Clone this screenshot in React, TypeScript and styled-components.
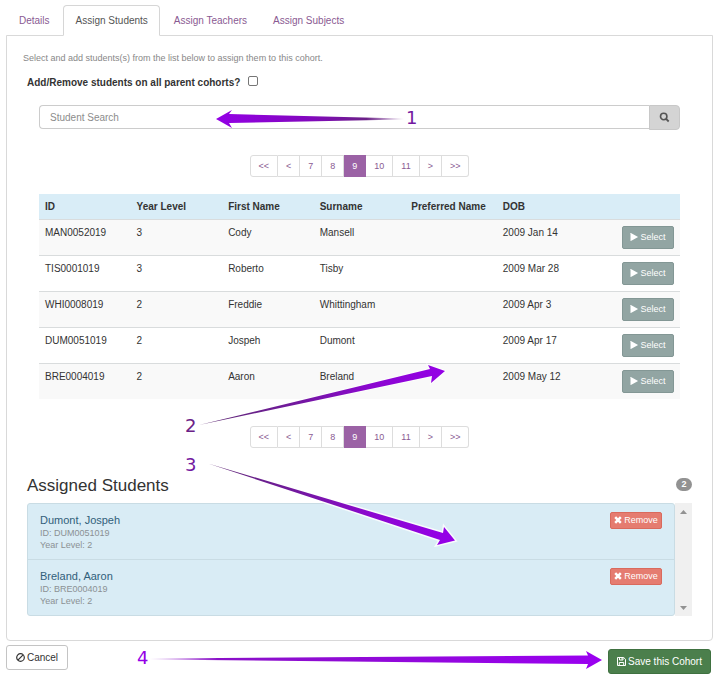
import React from "react";
import styled, { createGlobalStyle } from "styled-components";

const GlobalStyle = createGlobalStyle`
  *, *::before, *::after { box-sizing: border-box; }
  body {
    margin: 0;
    background: #fff;
    color: #333;
    font-family: "Liberation Sans", Arial, sans-serif;
    font-size: 10px;
    line-height: 14px;
  }
  button, input { font-family: inherit; }
  a { text-decoration: none; }
`;

const Page = styled.div`
  position: relative;
  padding: 5px 6px;
`;

const TabBar = styled.nav`
  display: flex;
  gap: 1px;
  margin-bottom: -1px;
`;

const Tab = styled.a<{ $active?: boolean }>`
  padding: 8px 11px 7px 12px;
  border: 1px solid ${(p) => (p.$active ? "#d6d6d6" : "transparent")};
  border-bottom-color: ${(p) => (p.$active ? "#fff" : "transparent")};
  border-radius: 4px 4px 0 0;
  background: ${(p) => (p.$active ? "#fff" : "transparent")};
  color: ${(p) => (p.$active ? "#555" : "#8a5a92")};
  line-height: 14px;
`;

const Panel = styled.main`
  border: 1px solid #d9d9d9;
  border-radius: 0 0 4px 4px;
  padding: 15px 20px 24px;
`;

const Hint = styled.p`
  margin: 0 0 11px -4px;
  color: #888;
  font-size: 9px;
`;

const ParentToggle = styled.div`
  display: flex;
  align-items: center;
  gap: 8px;
  height: 14px;
  font-weight: bold;

  input {
    width: 10px;
    height: 10px;
    margin: 0 0 4px;
    appearance: none;
    border: 1px solid #767676;
    border-radius: 2px;
    background: #fff;
  }
  input:checked { background: #9b62a5; }
`;

const Finder = styled.section`
  margin: 0 12px;
`;

const SearchBar = styled.form`
  display: flex;
  margin-top: 15px;
`;

const SearchInput = styled.input`
  flex: 1;
  min-width: 0;
  height: 24px;
  padding: 0 10px;
  border: 1px solid #ccc;
  border-right: 0;
  border-radius: 4px 0 0 4px;
  color: #555;
  font-size: 10px;
  &::placeholder { color: #8c8c8c; opacity: 1; }
`;

const SearchButton = styled.button`
  display: flex;
  align-items: center;
  justify-content: center;
  width: 31px;
  height: 25px;
  padding: 0;
  border: 1px solid #c8c8c8;
  border-radius: 0 4px 4px 0;
  background: #d4d4d4;
  color: #555;
`;

const PageList = styled.ul`
  display: flex;
  justify-content: center;
  margin: 0;
  padding: 0;
  list-style: none;
`;

const PageItem = styled.li`
  &:first-child a { border-left-width: 1px; border-radius: 3px 0 0 3px; }
  &:last-child a { border-radius: 0 3px 3px 0; }
`;

const PageLink = styled.a<{ $current?: boolean }>`
  display: block;
  padding: 4px 8px;
  border: 1px solid ${(p) => (p.$current ? "#9b62a5" : "#ddd")};
  border-left-width: 0;
  background: ${(p) => (p.$current ? "#9b62a5" : "#fff")};
  color: ${(p) => (p.$current ? "#fff" : "#8a5a92")};
  font-size: 9px;
  line-height: 12px;
`;

const PagerTop = styled.nav`
  margin: 25px 0 17px;
`;

const PagerBottom = styled.nav`
  margin: 27px 0 0;
`;

const StudentTable = styled.table`
  width: 100%;
  table-layout: fixed;
  border-collapse: separate;
  border-spacing: 0;
`;

const HeadCell = styled.th`
  height: 25px;
  padding: 6px 6px 5px;
  background: #d9edf7;
  text-align: left;
  white-space: nowrap;
`;

const StudentRow = styled.tr`
  &:nth-child(odd) { background: #f9f9f9; }
`;

const Cell = styled.td<{ $action?: boolean }>`
  padding: 6px;
  border-top: 1px solid #d9dcdd;
  vertical-align: top;
  text-align: ${(p) => (p.$action ? "right" : "left")};
`;

const SelectButton = styled.button`
  display: inline-flex;
  align-items: center;
  justify-content: center;
  gap: 2px;
  width: 52px;
  height: 23px;
  padding: 0 0 1px;
  border: 1px solid #839795;
  border-radius: 2px;
  background: #92a5a3;
  color: #fff;
  font-size: 9px;
  vertical-align: top;
`;

const AssignedHeader = styled.header`
  display: flex;
  align-items: center;
  justify-content: space-between;
  margin-top: 27px;
  height: 22px;
`;

const AssignedTitle = styled.h2`
  margin: 0;
  font-size: 17px;
  font-weight: normal;
  line-height: 22px;
`;

const Badge = styled.span`
  min-width: 16px;
  height: 13px;
  margin-bottom: 4px;
  border-radius: 7px;
  background: #929292;
  color: #fff;
  font-size: 9px;
  font-weight: bold;
  line-height: 13px;
  text-align: center;
`;

const ScrollBox = styled.div`
  display: flex;
  margin-top: 6px;
`;

const AssignedList = styled.ul`
  flex: 1;
  margin: 0;
  padding: 0;
  border: 1px solid #c9dce4;
  border-radius: 3px;
  background: #d9ecf5;
  list-style: none;
`;

const AssignedItem = styled.li`
  display: flex;
  align-items: flex-start;
  justify-content: space-between;
  padding: 8px 12px;
  & + & { border-top: 1px solid #c9dce4; }
`;

const StudentName = styled.div`
  padding-top: 1px;
  color: #31607a;
  font-size: 11px;
  line-height: 14px;
`;

const StudentMeta = styled.div`
  color: #8b9194;
  font-size: 9px;
  line-height: 12px;
`;

const RemoveButton = styled.button`
  display: flex;
  align-items: center;
  justify-content: center;
  gap: 2px;
  width: 52px;
  height: 17px;
  padding: 0 0 1px;
  border: 1px solid #d96a5d;
  border-radius: 2px;
  background: #e57c70;
  color: #fff;
  font-size: 9px;
`;

const ScrollTrack = styled.div`
  display: flex;
  flex-direction: column;
  align-items: center;
  justify-content: space-between;
  width: 17px;
  padding: 7px 0 6px;
  background: #f0f0f0;
`;

const Footer = styled.footer`
  display: flex;
  align-items: flex-start;
  justify-content: space-between;
  padding: 4px 2px 0 0;
`;

const CancelButton = styled.button`
  display: flex;
  align-items: center;
  justify-content: center;
  gap: 2px;
  width: 62px;
  height: 25px;
  padding: 0;
  border: 1px solid #c4c4c4;
  border-radius: 3px;
  background: #fff;
  color: #333;
  font-size: 10px;
`;

const SaveButton = styled.button`
  display: flex;
  align-items: center;
  justify-content: center;
  gap: 2px;
  width: 103px;
  height: 25px;
  margin-top: 4px;
  padding: 0;
  border: 1px solid #3f7140;
  border-radius: 3px;
  background: #4b7f4c;
  color: #fff;
  font-size: 10px;
`;

const Annotations = styled.svg`
  position: absolute;
  top: 0;
  left: 0;
  pointer-events: none;
  font-family: "DejaVu Sans", Verdana, sans-serif;
  font-size: 18px;
`;

const SearchIcon = () => (
  <svg width="11" height="11" viewBox="0 0 11 11" fill="none" stroke="currentColor" aria-hidden="true">
    <circle cx="4.7" cy="4.5" r="3.2" strokeWidth="1.6" />
    <path d="M7.1 6.9 9.7 9.5" strokeWidth="1.8" />
  </svg>
);

const PlayIcon = () => (
  <svg width="8" height="8" viewBox="0 0 8 8" fill="currentColor" aria-hidden="true">
    <path d="M.5.3Q.5-.1.9.1L7.700 3.700Q8 4 7.700 4.300L.9 7.900Q.5 8.100.5 7.700Z" />
  </svg>
);

const CrossIcon = () => (
  <svg width="8" height="8" viewBox="0 0 8 8" fill="none" stroke="currentColor" aria-hidden="true">
    <path d="M1.200 1.200 6.800 6.800M6.800 1.200 1.200 6.800" strokeWidth="2.500" />
  </svg>
);

const BanIcon = () => (
  <svg width="9" height="9" viewBox="0 0 9 9" fill="none" stroke="currentColor" strokeWidth="1.200" aria-hidden="true">
    <circle cx="4.500" cy="4.500" r="3.800" />
    <path d="M7.100 1.900 1.900 7.100" />
  </svg>
);

const SaveIcon = () => (
  <svg width="9" height="9" viewBox="0 0 9 9" fill="none" stroke="currentColor" aria-hidden="true">
    <path d="M.5.500H6.700L8.500 2.300V8.500H.5Z" />
    <path d="M2.500.5V3H6V.5M2.300 8.500V5.500H6.700V8.500" />
    <path d="M5 .5V2.700" />
  </svg>
);

const ScrollArrow = ({ down }: { down?: boolean }) => (
  <svg width="7" height="4" viewBox="0 0 7 4" fill="#929292" aria-hidden="true">
    <path d={down ? "M0 0H7L3.5 4Z" : "M0 4H7L3.5 0Z"} />
  </svg>
);

const columns = ["ID", "Year Level", "First Name", "Surname", "Preferred Name", "DOB"];

const students = [
  ["MAN0052019", "3", "Cody", "Mansell", "", "2009 Jan 14"],
  ["TIS0001019", "3", "Roberto", "Tisby", "", "2009 Mar 28"],
  ["WHI0008019", "2", "Freddie", "Whittingham", "", "2009 Apr 3"],
  ["DUM0051019", "2", "Jospeh", "Dumont", "", "2009 Apr 17"],
  ["BRE0004019", "2", "Aaron", "Breland", "", "2009 May 12"],
];

const assigned = [
  { name: "Dumont, Jospeh", id: "DUM0051019", year: 2 },
  { name: "Breland, Aaron", id: "BRE0004019", year: 2 },
];

const pages = ["<<", "<", "7", "8", "9", "10", "11", ">", ">>"];

const Pages = () => (
  <PageList>
    {pages.map((label) => (
      <PageItem key={label}>
        <PageLink href="#" $current={label === "9"} aria-current={label === "9" ? "page" : undefined}>
          {label}
        </PageLink>
      </PageItem>
    ))}
  </PageList>
);

export default function App() {
  return (
    <>
      <GlobalStyle />
      <Page>
        <TabBar aria-label="Cohort sections">
          <Tab href="#">Details</Tab>
          <Tab href="#" $active aria-current="page">Assign Students</Tab>
          <Tab href="#">Assign Teachers</Tab>
          <Tab href="#">Assign Subjects</Tab>
        </TabBar>

        <Panel>
          <Hint>Select and add students(s) from the list below to assign them to this cohort.</Hint>
          <ParentToggle>
            <label htmlFor="parent-cohorts">Add/Remove students on all parent cohorts?</label>
            <input id="parent-cohorts" type="checkbox" />
          </ParentToggle>

          <Finder>
            <SearchBar onSubmit={(e) => e.preventDefault()}>
              <SearchInput type="text" placeholder="Student Search" aria-label="Student Search" />
              <SearchButton type="submit" aria-label="Search">
                <SearchIcon />
              </SearchButton>
            </SearchBar>

            <PagerTop aria-label="Student pages">
              <Pages />
            </PagerTop>

            <StudentTable>
              <thead>
                <tr>
                  {columns.map((name) => (
                    <HeadCell key={name} scope="col">{name}</HeadCell>
                  ))}
                  <HeadCell as="td" />
                </tr>
              </thead>
              <tbody>
                {students.map((student) => (
                  <StudentRow key={student[0]}>
                    {student.map((value, i) => (
                      <Cell key={columns[i]}>{value}</Cell>
                    ))}
                    <Cell $action>
                      <SelectButton type="button">
                        <PlayIcon />
                        Select
                      </SelectButton>
                    </Cell>
                  </StudentRow>
                ))}
              </tbody>
            </StudentTable>

            <PagerBottom aria-label="Student pages, bottom">
              <Pages />
            </PagerBottom>
          </Finder>

          <AssignedHeader>
            <AssignedTitle>Assigned Students</AssignedTitle>
            <Badge>2</Badge>
          </AssignedHeader>
          <ScrollBox>
            <AssignedList>
              {assigned.map((s) => (
                <AssignedItem key={s.id}>
                  <div>
                    <StudentName>{s.name}</StudentName>
                    <StudentMeta>ID: {s.id}</StudentMeta>
                    <StudentMeta>Year Level: {s.year}</StudentMeta>
                  </div>
                  <RemoveButton type="button">
                    <CrossIcon />
                    Remove
                  </RemoveButton>
                </AssignedItem>
              ))}
            </AssignedList>
            <ScrollTrack>
              <ScrollArrow />
              <ScrollArrow down />
            </ScrollTrack>
          </ScrollBox>
        </Panel>

        <Footer>
          <CancelButton type="button">
            <BanIcon />
            Cancel
          </CancelButton>
          <SaveButton type="button">
            <SaveIcon />
            Save this Cohort
          </SaveButton>
        </Footer>

        <Annotations width="719" height="680" viewBox="0 0 719 680">
          <defs>
            <linearGradient id="a1" gradientUnits="userSpaceOnUse" x1="216" y1="0" x2="404" y2="0">
              <stop offset="0" stopColor="#9400e6" />
              <stop offset=".5" stopColor="#8208bd" />
              <stop offset=".8" stopColor="#6b2187" />
              <stop offset="1" stopColor="#6b2187" stopOpacity="0" />
            </linearGradient>
            <linearGradient id="a2" gradientUnits="userSpaceOnUse" x1="200" y1="0" x2="445" y2="0">
              <stop offset="0" stopColor="#5b2a6e" />
              <stop offset=".4" stopColor="#7318a0" />
              <stop offset=".7" stopColor="#8c07d0" />
              <stop offset="1" stopColor="#9400e6" />
            </linearGradient>
            <linearGradient id="a4" gradientUnits="userSpaceOnUse" x1="150" y1="0" x2="602" y2="0">
              <stop offset="0" stopColor="#8a10c8" stopOpacity="0" />
              <stop offset=".15" stopColor="#8a10c8" />
              <stop offset="1" stopColor="#9a00f0" />
            </linearGradient>
          </defs>
          <path d="M216 119 232 110 229 114 404 118.5V119.5L229 123 232 128Z" fill="url(#a1)" />
          <path d="M199 425 430 369 428 365 445 371 431 383 432 376Z" fill="url(#a2)" stroke="#fff" strokeWidth="2" strokeOpacity=".7" paintOrder="stroke" />
          <path d="M208 463.500 443 533 444 527 455 540.500 437 545 440 540Z" fill="url(#a2)" stroke="#fff" strokeWidth="3" strokeOpacity=".8" paintOrder="stroke" />
          <path d="M150 658.500 588 655.500 586 651 602 660 586 669 588 664 150 659.500Z" fill="url(#a4)" />
          <text x="406" y="124" fill="#7318a0">1</text>
          <text x="185" y="432" fill="#6b2187">2</text>
          <text x="185" y="471" fill="#7318a0">3</text>
          <text x="137" y="664" fill="#9400e6">4</text>
        </Annotations>
      </Page>
    </>
  );
}
